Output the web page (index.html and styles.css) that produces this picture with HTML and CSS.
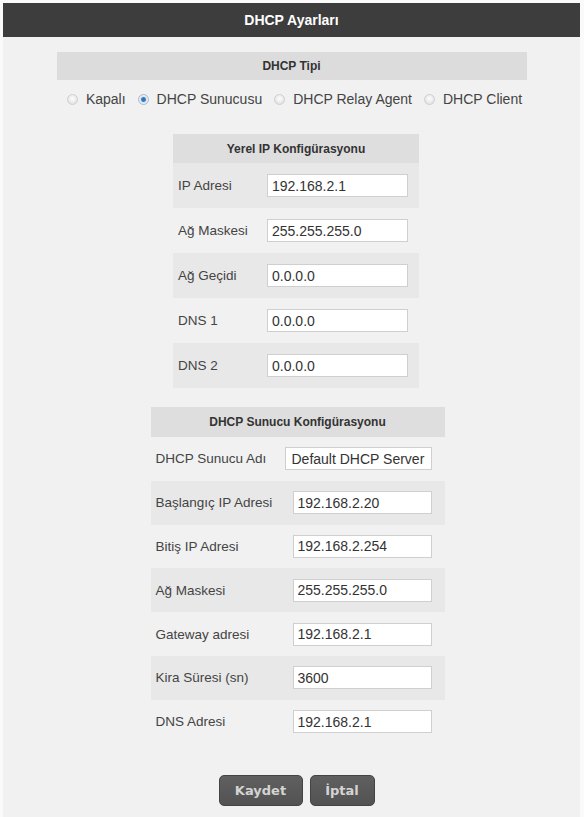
FILE: index.html
```html
<!DOCTYPE html>
<html lang="tr">

<head>
    <meta charset="UTF-8">
    <meta name="viewport" content="width=device-width, initial-scale=1.0">
    <link rel="stylesheet" href="styles.css">
</head>

<body>
    <div class="panel">
        <div class="head">DHCP Ayarları</div>

        <div class="type-bar">DHCP Tipi</div>
        <div class="radios">
            <label><input type="radio" name="type"> Kapalı</label>
            <label><input type="radio" name="type" checked> DHCP Sunucusu</label>
            <label><input type="radio" name="type"> DHCP Relay Agent</label>
            <label><input type="radio" name="type"> DHCP Client</label>
        </div>

        <div class="table local">
            <div class="table-head">Yerel IP Konfigürasyonu</div>
            <div class="row dark"><span>IP Adresi</span><input type="text" value="192.168.2.1"></div>
            <div class="row"><span>Ağ Maskesi</span><input type="text" value="255.255.255.0"></div>
            <div class="row dark"><span>Ağ Geçidi</span><input type="text" value="0.0.0.0"></div>
            <div class="row"><span>DNS 1</span><input type="text" value="0.0.0.0"></div>
            <div class="row dark"><span>DNS 2</span><input type="text" value="0.0.0.0"></div>
        </div>

        <div class="table server">
            <div class="table-head">DHCP Sunucu Konfigürasyonu</div>
            <div class="row"><span>DHCP Sunucu Adı</span><input type="text" class="wide" value="Default DHCP Server"></div>
            <div class="row dark"><span>Başlangıç IP Adresi</span><input type="text" value="192.168.2.20"></div>
            <div class="row"><span>Bitiş IP Adresi</span><input type="text" value="192.168.2.254"></div>
            <div class="row dark"><span>Ağ Maskesi</span><input type="text" value="255.255.255.0"></div>
            <div class="row"><span>Gateway adresi</span><input type="text" value="192.168.2.1"></div>
            <div class="row dark"><span>Kira Süresi (sn)</span><input type="text" value="3600"></div>
            <div class="row"><span>DNS Adresi</span><input type="text" value="192.168.2.1"></div>
        </div>

        <div class="buttons">
            <button class="btn save">Kaydet</button>
            <button class="btn cancel">İptal</button>
        </div>
    </div>
</body>

</html>
```

FILE: styles.css
```css
* {
    box-sizing: border-box;
    padding: 0;
    margin: 0;
    font-family: 'Liberation Sans', Arial, sans-serif;
}

body {
    background-color: #fafafa;
    min-height: 100vh;
}

.panel {
    margin: 3px 4px 0 3px;
    min-height: 814px;
    background-color: #f1f1f1;

    display: flex;
    flex-direction: column;
    align-items: center;
}

.head {
    align-self: stretch;
    height: 34px;

    display: flex;
    justify-content: center;
    align-items: center;

    background-color: #3d3d3d;
    color: white;
    font-size: 14px;
    font-weight: bold;
}

.type-bar {
    width: 470px;
    height: 28px;
    margin-top: 15px;

    display: flex;
    justify-content: center;
    align-items: center;

    background-color: #dcdcdc;
    color: #333;
    font-size: 12px;
    font-weight: bold;
}

.radios {
    display: flex;
    gap: 12px;
    margin-top: 11px;
    margin-left: 6px;
    color: #444;
    font-size: 14px;
}

.radios label {
    display: flex;
    align-items: center;
    gap: 8px;
}

.radios input {
    appearance: none;
    width: 11px;
    height: 11px;
    border-radius: 50%;
    border: 1px solid #cfcfcf;
    background: radial-gradient(circle at 50% 40%, #fdfdfd 0, #e2e2e2 80%);
}

.radios input:checked {
    border-color: #a9bccf;
    background: radial-gradient(circle, #2f6db5 0, #3f7fc4 2px, #dfe8f1 3px, #eef2f6 100%);
}

.table {
    display: flex;
    flex-direction: column;
}

.table.local {
    width: 246px;
    margin-top: 27px;
    margin-left: 9px;
}

.table.server {
    width: 294px;
    margin-top: 19px;
    margin-left: 12px;
}

.table-head {
    height: 29px;

    display: flex;
    justify-content: center;
    align-items: center;

    background-color: #dedede;
    color: #333;
    font-size: 12px;
    font-weight: bold;
}

.server .table-head {
    height: 30px;
}

.row {
    height: 45px;
    display: flex;
    align-items: center;
    padding: 0 11px 0 5px;
    color: #444;
    font-size: 13.5px;
}

.server .row {
    height: 43.8px;
}

.row.dark {
    background-color: #e8e8e8;
}

.row span {
    width: 89px;
}

.server .row span {
    width: 137px;
}

.row input {
    width: 141px;
    height: 23px;
    padding: 0 4px;

    border: 1px solid #cfcfcf;
    background-color: white;
    color: #333;
    font-size: 14px;
    outline: none;
}

.server .row input {
    width: 139px;
}

.server .row input.wide {
    width: 147px;
    margin-left: -8px;
    padding-left: 6px;
    padding-right: 0;
}

.buttons {
    display: flex;
    gap: 7px;
    margin-top: 31px;
    margin-left: 10px;
}

.btn {
    height: 31px;
    border: 1px solid #444;
    border-radius: 5px;

    background: linear-gradient(#606060, #525252);
    color: #d4d4d4;
    font-family: 'DejaVu Sans', sans-serif;
    font-size: 13px;
    font-weight: bold;
    cursor: pointer;
}

.btn.save {
    width: 84px;
}

.btn.cancel {
    width: 65px;
}
```
